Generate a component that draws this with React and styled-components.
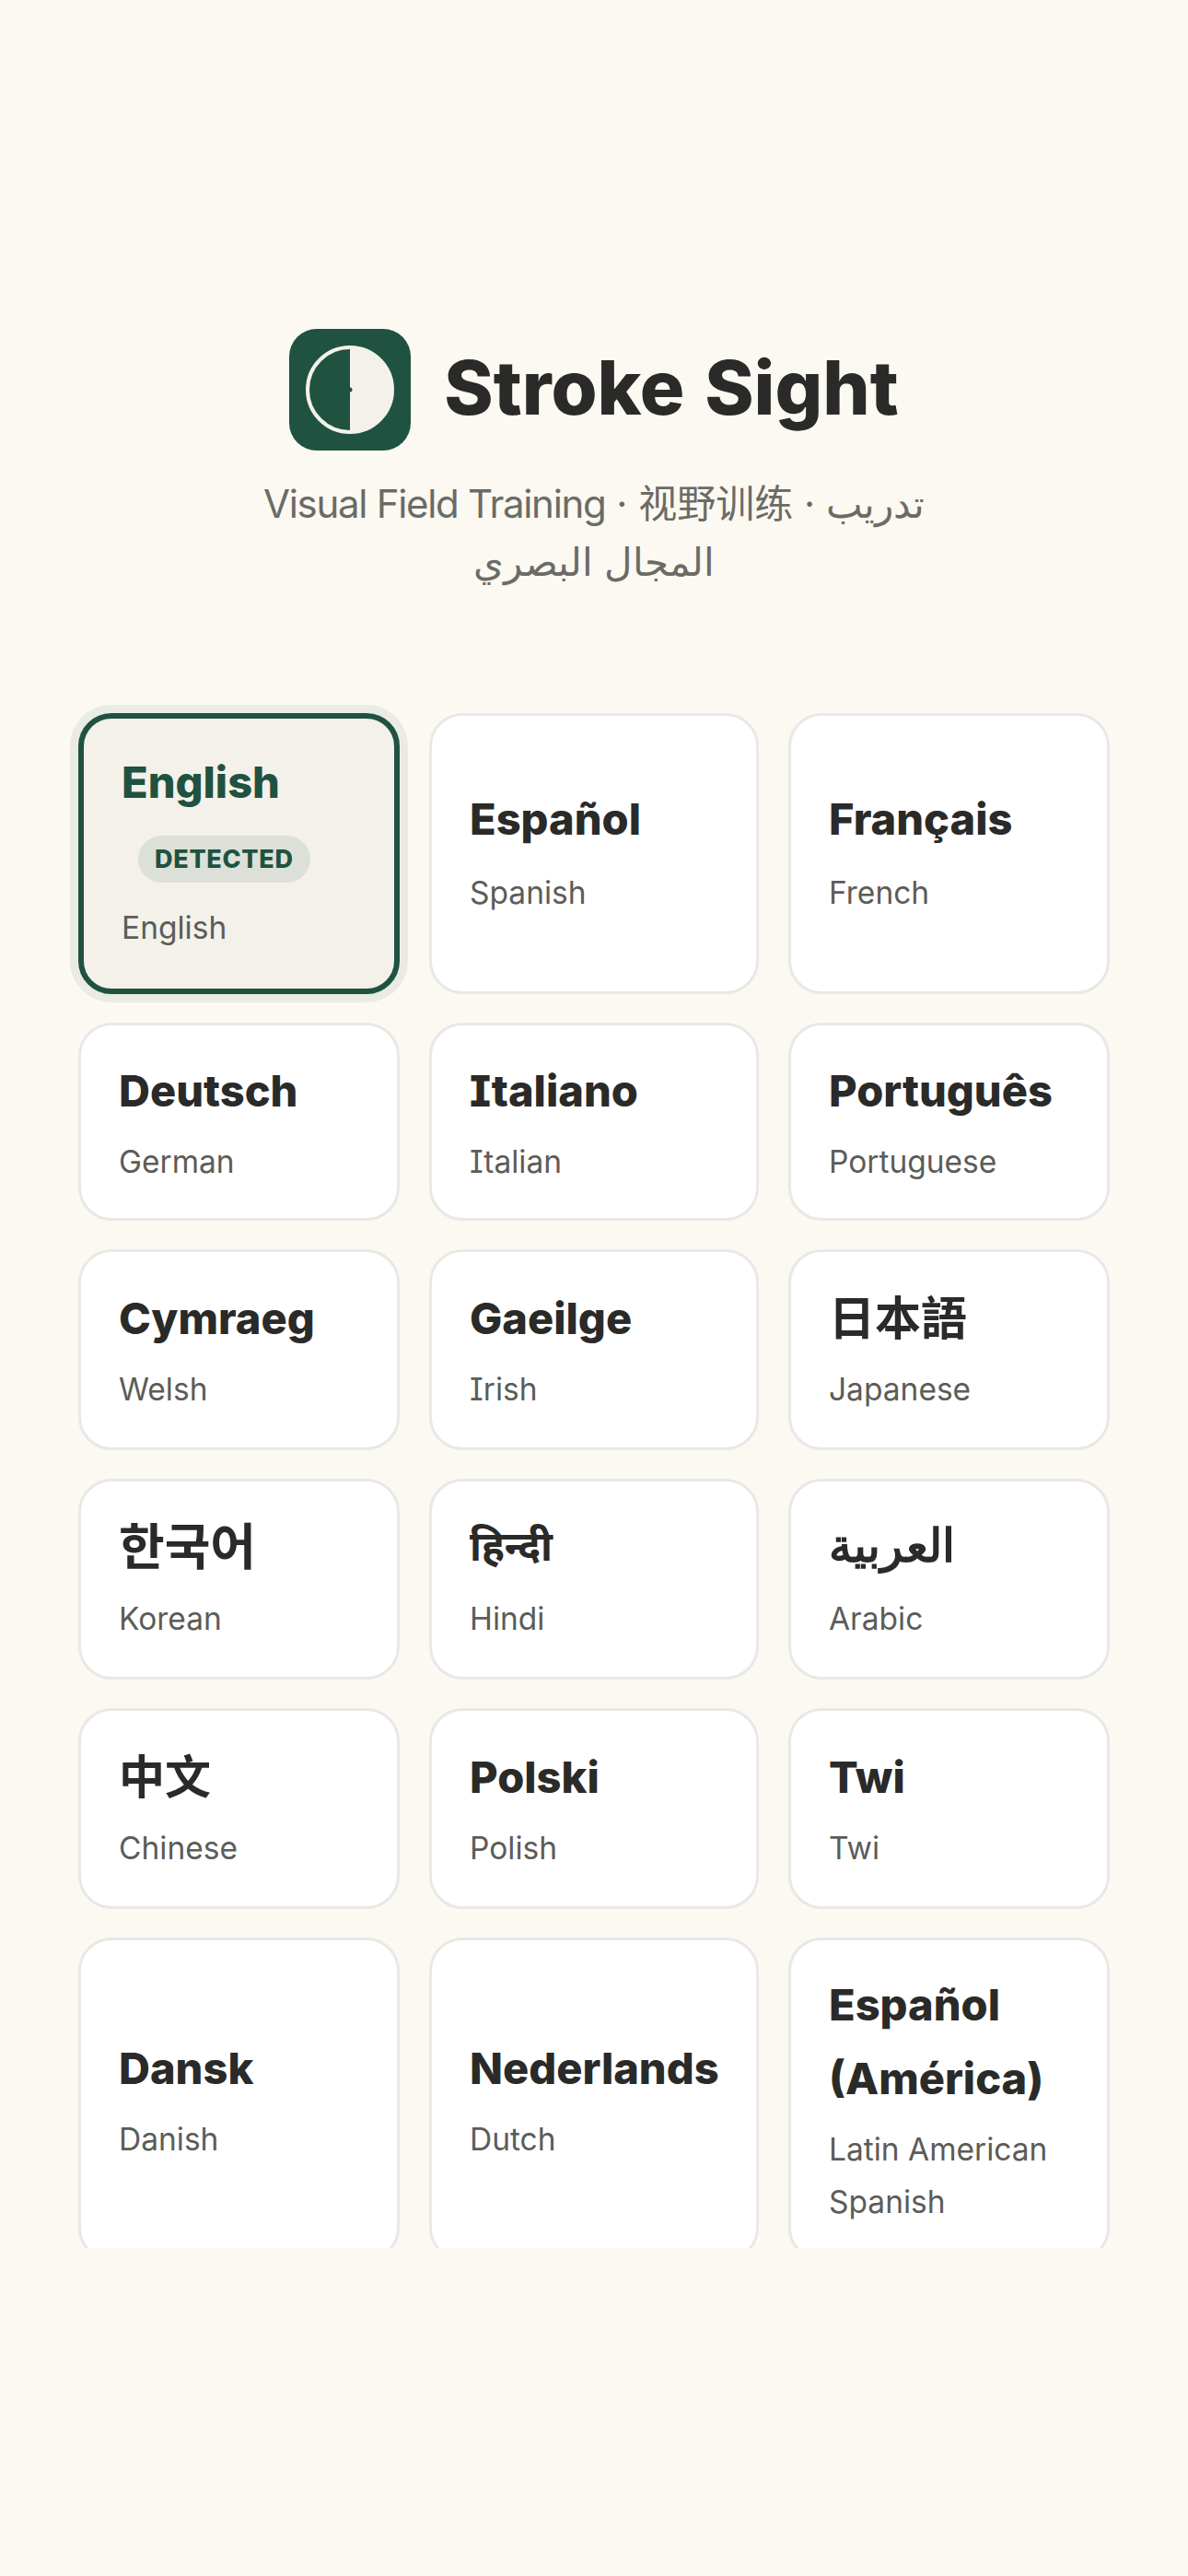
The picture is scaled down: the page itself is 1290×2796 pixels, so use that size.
import React from "react";
import styled, { createGlobalStyle } from "styled-components";

const Global = createGlobalStyle`
  html, body { margin: 0; padding: 0; background: #fbf9f2; }
  body {
    font-family: "Inter", "Noto Sans CJK SC", "Noto Sans", sans-serif;
    font-feature-settings: "cv08";
  }
`;

const Page = styled.div`
  width: 1290px;
  height: 2796px;
  background: #fbf9f2;
  display: flex;
  flex-direction: column;
  align-items: center;
  padding-top: 357px;
  box-sizing: border-box;
`;
const Brand = styled.div`
  display: flex;
  align-items: center;
  justify-content: center;
  gap: 36px;
`;
const Logo = styled.svg`
  width: 132px;
  height: 132px;
  display: block;
`;
const Title = styled.h1`
  margin: 0 0 3px;
  font-size: 81px;
  font-weight: 800;
  word-spacing: 4px;
  line-height: 1.2;
  color: #2a2a28;
`;
const Subtitle = styled.p`
  margin: 26px 0 0;
  width: 780px;
  text-align: center;
  font-size: 42px;
  line-height: 63px;
  color: #6b6b66;
`;
const Latin = styled.span`
  letter-spacing: -1.3px;
`;
const Scroller = styled.div`
  margin-top: 118px;
  width: 100%;
  height: 1681px;
  overflow: hidden;
  padding: 15px 85px 0;
  box-sizing: border-box;
`;
const Grid = styled.div`
  display: grid;
  grid-template-columns: 349px 358px 349px;
  grid-template-rows: 305px 215px 218px 218px 218px auto;
  column-gap: 32px;
  row-gap: 31px;
`;
const Card = styled.div`
  border: ${(p) => (p.$on ? "6px solid #1f5240" : "3px solid #e8e8e6")};
  background: ${(p) => (p.$on ? "#f3f1ea" : "#fff")};
  box-shadow: ${(p) => (p.$on ? "0 0 0 9px rgba(31,82,64,0.08)" : "none")};
  border-radius: 36px;
  padding: 30px 39px ${(p) => (p.$on ? 38 : p.$roomy ? 36 : 32)}px 41px;
  display: flex;
  flex-direction: column;
  justify-content: center;
  align-items: flex-start;
  box-sizing: border-box;
`;
const Name = styled.div`
  font-size: ${(p) => p.$size || 47}px;
  font-weight: ${(p) => p.$weight || 800};
  line-height: ${(p) => p.$lh || 80}px;
  margin-bottom: ${(p) => 80 - (p.$lh || 80)}px;
  color: ${(p) => (p.$on ? "#1f5240" : "#2a2a28")};
`;
const Badge = styled.span`
  margin: 18px 0 12px 18px;
  padding: 0 18px;
  height: 51px;
  line-height: 51px;
  border-radius: 999px;
  background: rgba(31, 82, 64, 0.1);
  color: #1f5240;
  font-size: 27px;
  font-weight: 800;
  letter-spacing: 0.7px;
`;
const Sub = styled.div`
  margin-top: ${(p) => (p.$roomy ? 12 : 9)}px;
  font-size: 33.5px;
  line-height: 57px;
  color: #5c5c58;
`;

const langs = [
  { n: "Español", s: "Spanish", roomy: true },
  { n: "Français", s: "French", roomy: true },
  { n: "Deutsch", s: "German" },
  { n: "Italiano", s: "Italian" },
  { n: "Português", s: "Portuguese" },
  { n: "Cymraeg", s: "Welsh" },
  { n: "Gaeilge", s: "Irish" },
  { n: "日本語", s: "Japanese", size: 50, weight: 700 },
  { n: "한국어", s: "Korean", size: 54, weight: 700 },
  { n: "हिन्दी", s: "Hindi", size: 44, weight: 700, lh: 77 },
  { n: "العربية", s: "Arabic", size: 50, weight: 700, lh: 74 },
  { n: "中文", s: "Chinese", size: 50, weight: 700 },
  { n: "Polski", s: "Polish" },
  { n: "Twi", s: "Twi" },
  { n: "Dansk", s: "Danish" },
  { n: "Nederlands", s: "Dutch" },
  { n: "Español (América)", s: "Latin American Spanish" },
];

export default function App() {
  return (
    <Page>
      <Global />
      <Brand>
        <Logo viewBox="0 0 132 132">
          <rect width="132" height="132" rx="30" fill="#1f5240" />
          <path d="M66 20a46 46 0 0 1 0 92z" fill="#f3f1ea" />
          <circle cx="66" cy="66" r="46" fill="none" stroke="#f3f1ea" strokeWidth="4" />
          <circle cx="66" cy="66" r="2.5" fill="#1f5240" />
        </Logo>
        <Title>Stroke Sight</Title>
      </Brand>
      <Subtitle>
        <Latin>Visual Field Training</Latin> · 视野训练 · تدريب المجال البصري
      </Subtitle>
      <Scroller>
        <Grid>
          <Card $on>
            <Name $on>English</Name>
            <Badge>DETECTED</Badge>
            <Sub>English</Sub>
          </Card>
          {langs.map(({ n, s, size, weight, roomy, lh }) => (
            <Card key={n} $roomy={roomy}>
              <Name $size={size} $weight={weight} $lh={lh}>{n}</Name>
              <Sub $roomy={roomy}>{s}</Sub>
            </Card>
          ))}
        </Grid>
      </Scroller>
    </Page>
  );
}
